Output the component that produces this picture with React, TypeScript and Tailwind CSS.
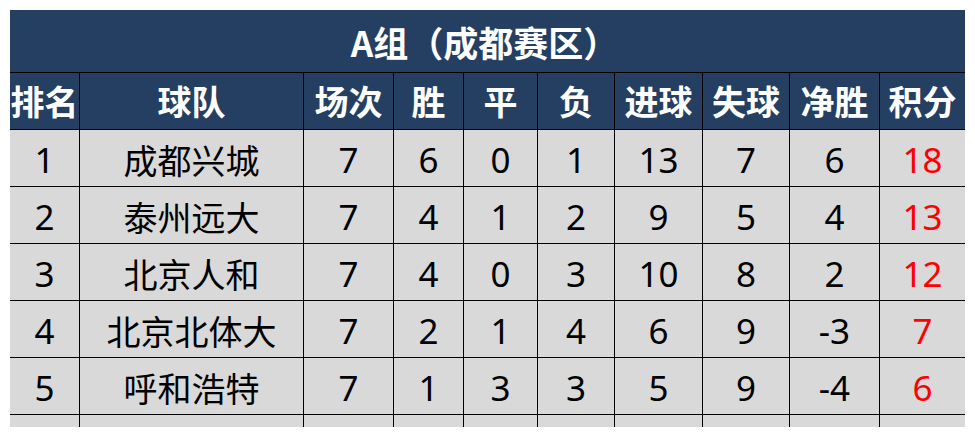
import React from 'react';

const cols = 'grid grid-cols-[69px_224px_90px_70px_74px_77px_88px_87px_90px_86px]';

const headers = ['排名', '球队', '场次', '胜', '平', '负', '进球', '失球', '净胜', '积分'];

const rows: (string | number)[][] = [
  [1, '成都兴城', 7, 6, 0, 1, 13, 7, 6, 18],
  [2, '泰州远大', 7, 4, 1, 2, 9, 5, 4, 13],
  [3, '北京人和', 7, 4, 0, 3, 10, 8, 2, 12],
  [4, '北京北体大', 7, 2, 1, 4, 6, 9, -3, 7],
  [5, '呼和浩特', 7, 1, 3, 3, 5, 9, -4, 6],
  ['', '', '', '', '', '', '', '', '', ''],
];

export default function App() {
  return (
    <div
      className="w-[975px] h-[437px] bg-white pt-[10px] pl-[10px]"
      style={{ fontFamily: '"Noto Sans CJK SC", "Microsoft YaHei", sans-serif' }}
    >
      <div className="w-[955px] h-[417px] overflow-hidden">
        {/* Title */}
        <div className="h-[63px] bg-[#243f61] border-b border-black flex items-center justify-center">
          <span className="text-white font-bold text-[35px] leading-none -ml-[6px]">A组（成都赛区）</span>
        </div>

        {/* Header row */}
        <div className={`${cols} h-[57px] bg-[#243f61] border-b border-black`}>
          {headers.map((h, i) => (
            <div
              key={h}
              className={`flex items-center justify-center text-white font-bold text-[34px] leading-none whitespace-nowrap overflow-hidden ${
                i > 0 ? 'border-l border-black' : ''
              }`}
            >
              {h}
            </div>
          ))}
        </div>

        {/* Data rows */}
        {rows.map((r, ri) => (
          <div key={ri} className={`${cols} h-[57px] bg-[#d9d9d9] border-b border-black`}>
            {r.map((v, ci) => (
              <div
                key={ci}
                className={`flex items-center justify-center leading-none pt-[3px] ${
                  ci === 1 ? 'text-[34px]' : 'text-[35px] font-["Noto_Sans",sans-serif]'
                } ${ci === 9 ? 'text-[#ff0000]' : 'text-black'} ${ci > 0 ? 'border-l border-black' : ''}`}
              >
                {v}
              </div>
            ))}
          </div>
        ))}
      </div>
    </div>
  );
}
